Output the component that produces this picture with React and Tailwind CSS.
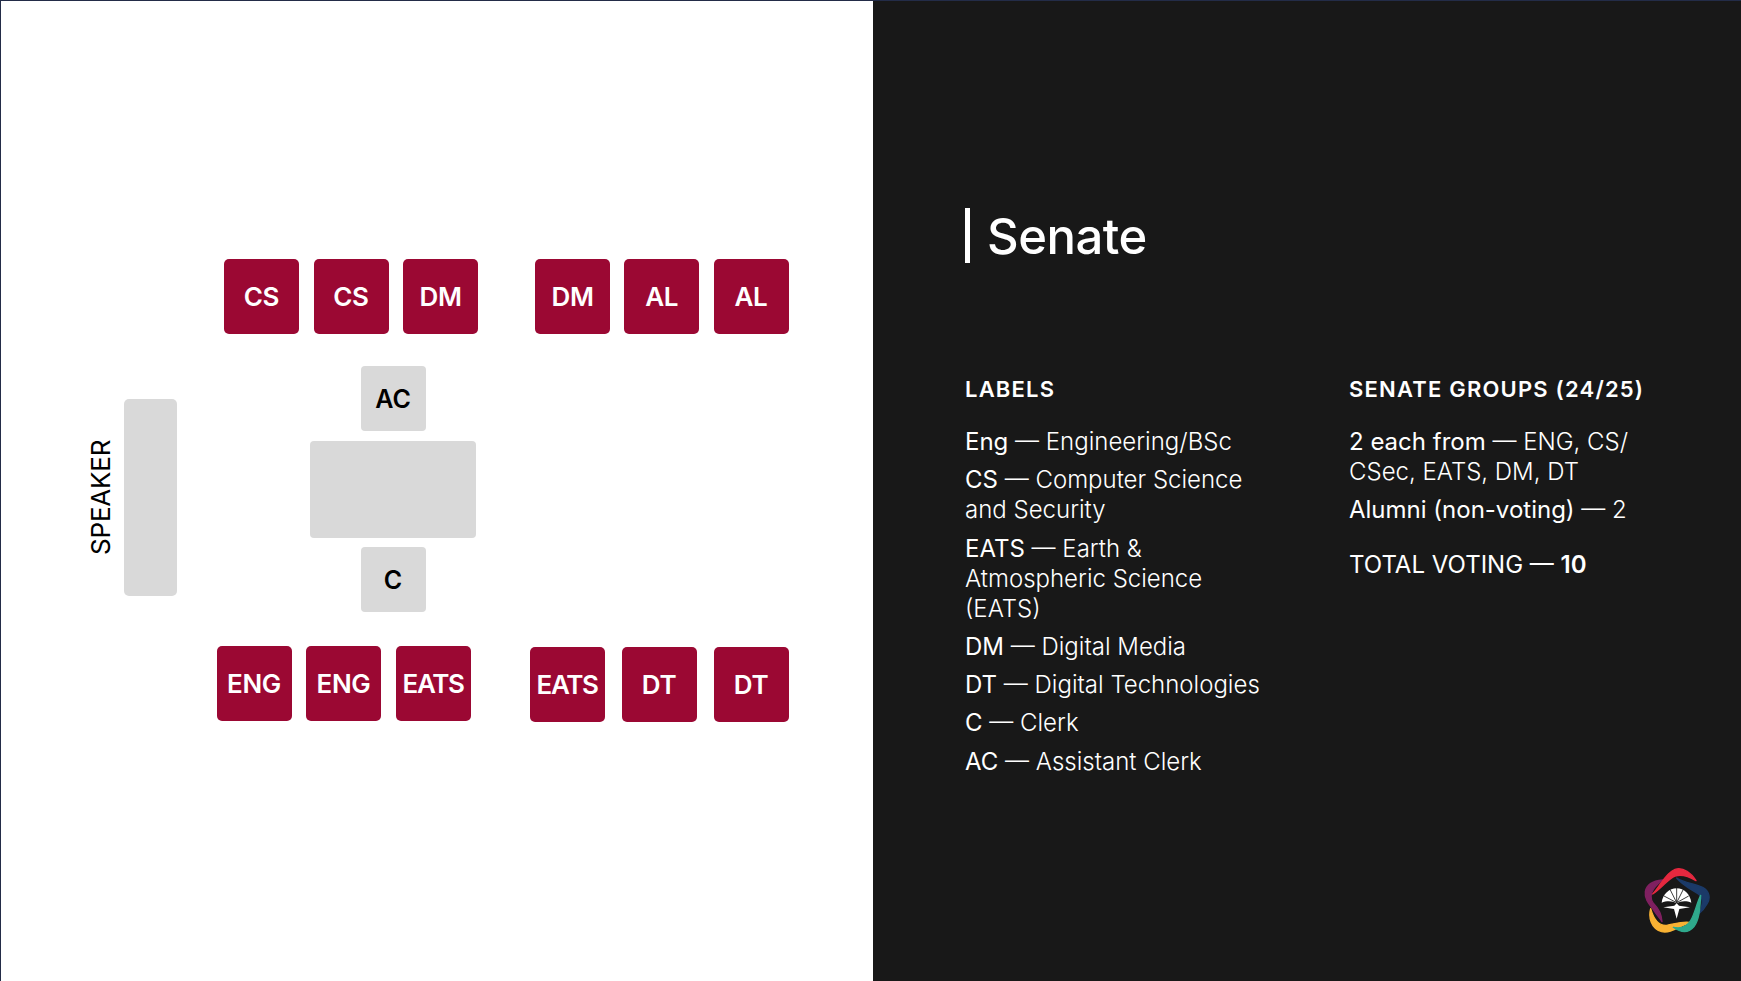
const font = "font-['Inter','Noto_Sans',sans-serif]";

const Seat = ({ label, tight, className = '' }) => (
  <div className={`w-[75px] h-[75px] rounded-[5px] bg-[#9b0833] flex items-center justify-center text-white text-[26px] font-semibold ${tight ? 'tracking-[-1.4px]' : 'tracking-[-0.3px]'} ${className}`}>
    {label}
  </div>
);

const Clerk = ({ label }) => (
  <div className="w-[65px] h-[65px] pt-[2px] rounded-[4px] bg-[#d9d9d9] flex items-center justify-center text-black text-[25px] font-semibold">
    {label}
  </div>
);

const Entry = ({ term, children }) => (
  <p className="font-light">
    <span className="font-normal">{term}</span> — {children}
  </p>
);

const Logo = () => (
  <svg viewBox="0 0 270 270" className="w-[90px] h-[90px]" strokeWidth="4" strokeLinejoin="round">
    <path fill="#7f2060" stroke="#7f2060" d="M128 90C105 92 80 100 76 125C72 150 95 170 104 185C112 197 120 205 126 215C125 195 115 175 100 160C90 148 92 130 100 118C108 105 118 98 128 90Z" />
    <path fill="#1b3a68" stroke="#1b3a68" d="M170 84C195 100 225 100 248 112C268 122 272 145 262 160C255 172 248 182 238 190C248 165 252 145 235 132C215 118 190 108 170 84Z" />
    <path fill="#e5283f" stroke="#e5283f" d="M98 132C120 110 135 70 165 58C190 50 215 70 228 92C205 78 185 72 165 78C145 85 125 115 98 132Z" />
    <path fill="#f9b233" stroke="#f9b233" d="M92 176C85 200 92 235 125 245C155 252 185 222 214 218C190 212 165 222 140 226C115 228 100 205 92 176Z" />
    <path fill="#2fa98c" stroke="#2fa98c" d="M242 136C240 165 240 205 222 230C205 250 185 250 160 232C180 236 200 232 212 212C225 190 230 160 242 136Z" />
    <path fill="#fff" d="M125 158C128 132 148 115 170 115C192 115 211 132 214 158C200 152 182 152 170 160C158 152 140 152 125 158Z" />
    <path stroke="#181818" strokeWidth="2.5" fill="none" d="M170 158L170 112M170 158L150 118M170 158L190 118M170 158L132 138M170 158L206 138" />
    <path fill="#fff" d="M130 172L163 167L170 160L177 167L210 172L178 177L170 206L162 177Z" />
  </svg>
);

export default function App() {
  return (
    <div className={`w-[1741px] h-[981px] flex overflow-hidden bg-white border-t border-l border-[#232c48] ${font}`}>
      <div className="w-[872px] pt-[258px] flex flex-col">
        <div className="flex ml-[223px]">
          <div className="flex gap-[14.5px]">
            <Seat label="CS" />
            <Seat label="CS" />
            <Seat label="DM" />
          </div>
          <div className="flex gap-[14.25px] ml-[57px]">
            <Seat label="DM" />
            <Seat label="AL" />
            <Seat label="AL" />
          </div>
        </div>

        <div className="flex mt-[32px]">
          <div className="flex mt-[33px] ml-[84px] h-[197px]">
            <div className="w-[30px] flex items-center justify-center text-black text-[26px] tracking-[-0.2px] [writing-mode:vertical-rl] rotate-180">
              SPEAKER
            </div>
            <div className="w-[53px] ml-[9px] h-full rounded-[5px] bg-[#d9d9d9]"></div>
          </div>
          <div className="flex flex-col items-center gap-[9.5px] w-[166px] ml-[133px]">
            <Clerk label="AC" />
            <div className="w-[166px] h-[97px] rounded-[4px] bg-[#d9d9d9]"></div>
            <Clerk label="C" />
          </div>
        </div>

        <div className="flex mt-[34px] ml-[215.5px]">
          <div className="flex gap-[14.5px]">
            <Seat label="ENG" />
            <Seat label="ENG" />
            <Seat label="EATS" tight />
          </div>
          <div className="flex ml-[59px] mt-px">
            <Seat label="EATS" tight />
            <Seat label="DT" className="ml-[17px]" />
            <Seat label="DT" className="ml-[17px]" />
          </div>
        </div>
      </div>

      <div className="flex-1 bg-[#181818] text-white flex flex-col pl-[92px]">
        <h1 className="mt-[207px] border-l-[5px] border-white pl-[17px] pt-[2px] h-[55px] flex items-center text-[49px] font-medium leading-none tracking-[-0.5px]">
          Senate
        </h1>

        <div className="flex mt-[111px] text-[24px] leading-[30px]">
          <div className="w-[384px]">
            <h2 className="text-[22px] font-semibold tracking-[1.2px] mb-[23px]">LABELS</h2>
            <div className="flex flex-col gap-[8.3px] w-[300px]">
              <Entry term="Eng">Engineering/BSc</Entry>
              <Entry term="CS">Computer Science and Security</Entry>
              <Entry term="EATS">Earth &amp; Atmospheric Science (EATS)</Entry>
              <Entry term="DM">Digital Media</Entry>
              <Entry term="DT">Digital Technologies</Entry>
              <Entry term="C">Clerk</Entry>
              <Entry term="AC">Assistant Clerk</Entry>
            </div>
          </div>
          <div>
            <h2 className="text-[22px] font-semibold tracking-[1.2px] mb-[23px]">SENATE GROUPS (24/25)</h2>
            <div className="flex flex-col gap-[8.3px] w-[290px]">
              <Entry term="2 each from">ENG, CS/ CSec, EATS, DM, DT</Entry>
              <Entry term="Alumni (non-voting)">2</Entry>
              <p className="mt-[16px] font-normal">TOTAL VOTING — <span className="font-semibold">10</span></p>
            </div>
          </div>
        </div>

        <div className="mt-auto self-end mr-[31px] mb-[41px]">
          <Logo />
        </div>
      </div>
    </div>
  );
}
